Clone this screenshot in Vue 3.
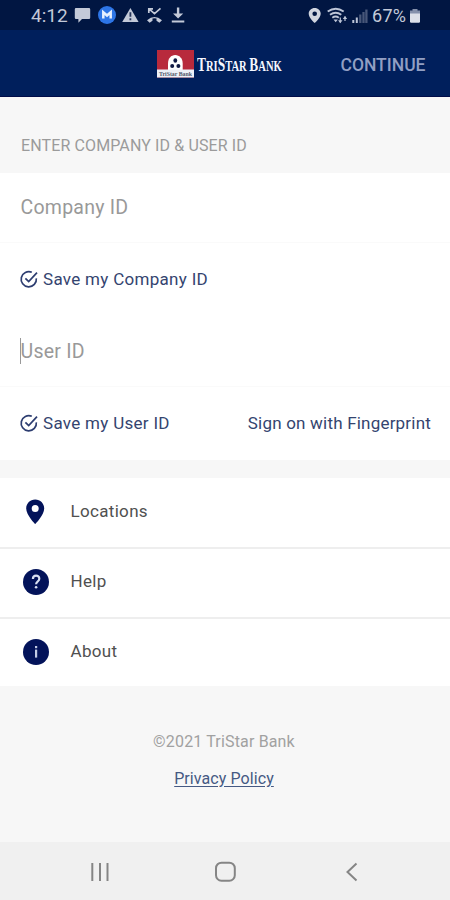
<script setup>
const menu = [
  { label: 'Locations', icon: 'pin' },
  { label: 'Help', icon: 'help' },
  { label: 'About', icon: 'info' },
]
</script>

<template>
  <div class="screen">
    <div class="status">
      <span class="clock">4:12</span>
      <svg class="status-left" width="112" height="20" viewBox="0 0 112 20">
        <g fill="#c3c9d8">
          <path d="M2 3h13q1.200 0 1.200 1.200v8.600q0 1.200-1.200 1.200H8l-3.600 3.800V14H2q-1.200 0-1.200-1.200V4.200Q.8 3 2 3z" />
          <path d="M56.400 3 64.600 17H48.200z" />
          <path d="M102.900 2.500h2.400v6h3.900l-5.100 5.100-5.100-5.100h3.900zM97.800 15.500h12.500v2H97.800z" />
        </g>
        <circle cx="33" cy="10" r="9" fill="#2d75e6" />
        <path d="M29.300 13.500v-6.300l3.700 3.300 3.700-3.300v6.300" fill="none" stroke="#e6f0ff" stroke-width="2.500" />
        <path d="M56.400 7.300v4.500M56.400 13.200v2" stroke="#253459" stroke-width="1.800" />
        <path d="M74.800 8V3.800h4.200M75.300 4.200l5.200 4.400 6-5.200" fill="none" stroke="#c3c9d8" stroke-width="1.700" />
        <path d="M73 15.300q7.500-6.600 15 0l-2.600 2.500-2.900-2v-2.200q-2-.6-4 0v2.200l-2.900 2z" fill="#c3c9d8" />
      </svg>
      <svg class="status-right" width="62" height="20" viewBox="0 0 62 20">
        <path fill="#d1d5df" fill-rule="evenodd" d="M6.700 3C3.300 3 .7 5.500.7 8.700c0 4.100 6 9.300 6 9.300s6-5.200 6-9.300C12.700 5.500 10.100 3 6.700 3zm0 3.400a2.300 2.300 0 1 1 0 4.600 2.300 2.300 0 0 1 0-4.600z" />
        <g fill="none" stroke="#bdc5d7" stroke-width="1.900">
          <path d="M19.700 6.500q8-5.500 16 0M22 9.700q5.700-3.900 11.300 0M24.300 12.700q3.300-2.300 6.500 0" />
          <path d="M32.300 12.500v5M37 11.500v4.500" stroke-width="1.200" />
        </g>
        <path d="m25.500 14.500 2.200 2.800 2.200-2.800zM30.100 15.300h4.400l-2.200 2.900zM34.800 13.900H39.200L37 11z" fill="#bdc5d7" />
        <path d="M45.300 15v3M48.800 12.500V18" stroke="#bdc5d7" stroke-width="2" />
        <path d="M52.300 9.500V18M55.500 7v11M58.400 4.500V18" stroke="#485779" stroke-width="2.300" />
      </svg>
      <span class="percent">67%</span>
      <svg class="battery" width="12" height="16" viewBox="0 0 12 16">
        <path d="M3.500 1h5v1.500H11V6H1V2.500h2.500z" fill="#8591ac" />
        <path d="M1 5.500h10v8q0 1.200-1.200 1.200H2.200Q1 14.700 1 13.500z" fill="#dce0e9" />
      </svg>
    </div>

    <header class="header">
      <div class="brand">
        <svg width="39" height="30" viewBox="0 0 39 30">
          <rect x="1" y="1" width="37" height="27.500" fill="#b82a3c" />
          <path d="M12 21V14.500C12 9.500 15 6 19.200 6s7.500 3.500 7.500 8.500V21z" fill="#fff" />
          <ellipse cx="19.300" cy="11.500" rx="1.900" ry="2.300" fill="#111b45" />
          <circle cx="16.200" cy="17" r="2" fill="#111b45" />
          <circle cx="22.400" cy="17" r="2" fill="#111b45" />
          <rect x="1" y="20.500" width="37" height="8" fill="#edf0f7" />
          <text class="logo-small" x="3" y="27" textLength="33" lengthAdjust="spacingAndGlyphs">TriStar Bank</text>
        </svg>
        <div class="logo-name"><span>T</span>RI<span>S</span>TAR <span>B</span>ANK</div>
      </div>
      <span class="continue">CONTINUE</span>
    </header>

    <div class="section-label"><span>ENTER COMPANY ID &amp; USER ID</span></div>

    <section class="form">
      <div class="field company"><span>Company ID</span></div>
      <div class="option">
        <svg class="check" width="20" height="20" viewBox="0 0 20 20"><path d="M12.800 3.300A7.600 7.600 0 1 0 17.300 9.300M6.400 9.300l3.300 3.300 8.300-9" /></svg>
        <span class="save-company">Save my Company ID</span>
      </div>
      <div class="field user"><i class="caret"></i><span>User ID</span></div>
      <div class="option">
        <svg class="check" width="20" height="20" viewBox="0 0 20 20"><path d="M12.800 3.300A7.600 7.600 0 1 0 17.300 9.300M6.400 9.300l3.300 3.300 8.300-9" /></svg>
        <span class="save-user">Save my User ID</span>
        <span class="finger">Sign on with Fingerprint</span>
      </div>
    </section>

    <nav class="menu">
      <div v-for="m in menu" :key="m.label" class="item">
        <svg width="28" height="28" viewBox="0 0 28 28">
          <path v-if="m.icon === 'pin'" fill="#03135a" fill-rule="evenodd" d="M13.200 1.500c-5.100 0-9 3.900-9 8.900 0 6.500 9 15.600 9 15.600s9-9.100 9-15.600c0-5-3.900-8.900-9-8.900zm0 5.400a3.500 3.500 0 1 1 0 7 3.500 3.500 0 0 1 0-7z" />
          <template v-else>
            <circle cx="14" cy="14" r="13" fill="#03135a" />
            <g v-if="m.icon === 'help'">
              <path d="M10.900 11c0-4.500 6.400-4.300 6.400-.3 0 2.700-3.200 2.900-3.200 5.600" fill="none" stroke="#d9e0f2" stroke-width="2.200" />
              <circle cx="14.100" cy="19.300" r="1.300" fill="#d9e0f2" />
            </g>
            <g v-else fill="#c3cce6">
              <rect x="13" y="8" width="2.200" height="2.200" />
              <rect x="13" y="11.600" width="2.200" height="8" />
            </g>
          </template>
        </svg>
        <span>{{ m.label }}</span>
      </div>
    </nav>

    <footer class="footer">
      <span class="copy">©2021 TriStar Bank</span>
      <span class="privacy">Privacy Policy</span>
    </footer>

    <div class="system-nav">
      <svg width="24" height="24" viewBox="0 0 24 24"><path d="M4.300 3v18M12 3v18M19.500 3v18" /></svg>
      <svg width="24" height="24" viewBox="0 0 24 24"><rect x="2" y="2.700" width="18.800" height="18" rx="5.500" /></svg>
      <svg width="24" height="24" viewBox="0 0 24 24"><path d="m17.500 3.500-9 8.500 9 8.500" /></svg>
    </div>
  </div>
</template>

<style>
body { margin: 0; }
</style>

<style scoped>
.screen {
  width: 450px;
  height: 900px;
  display: flex;
  flex-direction: column;
  overflow: hidden;
  background: #f7f7f7;
  font-family: Roboto, "Liberation Sans", sans-serif;
  white-space: nowrap;
}
svg { display: block; flex: none; }
.status {
  height: 30px;
  flex: none;
  display: flex;
  align-items: center;
  box-sizing: border-box;
  padding: 0 29px 0 31px;
  background: #011642;
  color: #c3c9d8;
}
.clock { width: 43px; font-size: 19px; }
.status-right { margin-left: auto; }
.percent { width: 37px; margin-left: 2px; font-size: 18px; letter-spacing: 0.3px; }
.battery { margin-top: 1px; }
.header {
  height: 67px;
  flex: none;
  display: flex;
  align-items: center;
  justify-content: space-between;
  box-sizing: border-box;
  padding: 2px 24.5px 0 156px;
  background: #001f5c;
  border-bottom: 1px solid #000c48;
}
.brand { display: flex; align-items: center; gap: 2px; width: 126px; }
.logo-small { font: bold 7px "Liberation Serif", serif; fill: #505669; }
.logo-name {
  padding-top: 2px;
  font: bold 15px/22px "Liberation Serif", serif;
  color: #f5f7ff;
  transform: scaleX(0.705);
  transform-origin: 0 50%;
}
.logo-name span { font-size: 19px; }
.continue { padding-top: 1px; color: #929fc3; font-size: 17.5px; font-weight: 500; }
.section-label {
  height: 76px;
  flex: none;
  display: flex;
  align-items: center;
  box-sizing: border-box;
  padding: 21px 20px 0 21px;
  color: #9b9b9b;
  font-size: 16px;
  letter-spacing: 0.12px;
}
.form { height: 287px; flex: none; background: #fff; }
.field {
  display: flex;
  align-items: center;
  box-sizing: border-box;
  height: 70px;
  padding: 0 20px;
  border-bottom: 1px solid #fafafa;
  color: #999;
  font-size: 19.5px;
  letter-spacing: 0.25px;
}
.field span { padding-left: 0.5px; }
.user { height: 71px; }
.caret { width: 1px; height: 26px; background: #999; margin-right: -1px; }
.option {
  display: flex;
  align-items: center;
  box-sizing: border-box;
  height: 73px;
  padding: 0 19px 2px;
  color: #34446f;
  font-size: 17px;
  letter-spacing: 0.3px;
}
.check { fill: none; stroke: #2d3d70; stroke-width: 1.7; margin-right: 4px; }
.finger { margin-left: auto; letter-spacing: 0.2px; }
.menu { flex: none; margin-top: 18px; height: 208px; background: #fff; }
.item {
  display: flex;
  align-items: center;
  gap: 20px;
  height: 69px;
  margin-bottom: -1px;
  padding-left: 22px;
  border-bottom: 2px solid #eee;
  color: #505050;
  font-size: 17px;
  letter-spacing: 0.32px;
}
.item:last-child { height: 68px; margin-bottom: 0; border-bottom: 0; }
.item svg { margin-top: -1px; }
.item span { padding: 0 0 3px 0.5px; }
.footer {
  flex: 1;
  display: flex;
  flex-direction: column;
  align-items: center;
  gap: 18px;
  padding-top: 46px;
  font-size: 16px;
}
.copy { color: #a1a1a1; letter-spacing: 0.16px; margin-right: 2px; }
.privacy { color: #455983; text-decoration: underline; text-underline-offset: 2px; letter-spacing: 0.08px; margin-right: 2px; }
.system-nav {
  height: 58px;
  flex: none;
  display: flex;
  justify-content: space-between;
  align-items: center;
  box-sizing: border-box;
  padding: 1px 87px 0 88px;
  background: #f0f0f0;
}
.system-nav svg { fill: none; stroke: #858585; stroke-width: 2; }
</style>
